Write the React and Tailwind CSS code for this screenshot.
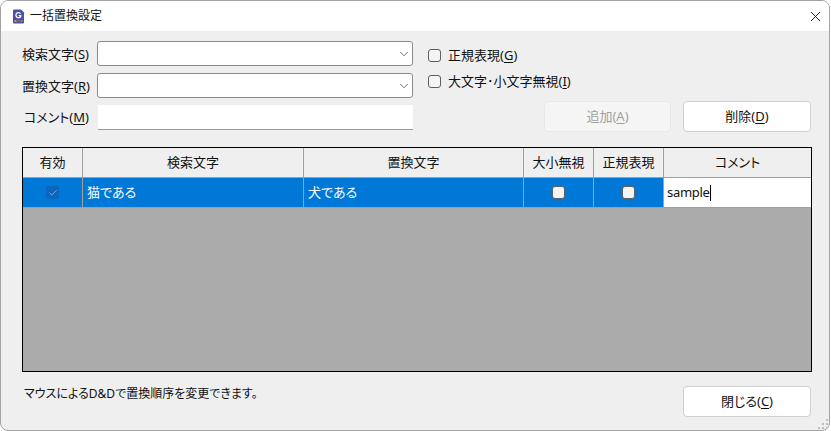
import { X, ChevronDown, Check } from 'lucide-react'

const font = { fontFamily: '"Noto Sans", "Noto Sans CJK JP", sans-serif' }

function Hot({ children }) {
  return <span className="underline underline-offset-2">{children}</span>
}

function Label({ children, className = '' }) {
  return <span className={`text-[13px] leading-[18px] text-[#111] whitespace-nowrap ${className}`}>{children}</span>
}

function Combo() {
  return (
    <div className="w-[316px] h-[25px] bg-white border border-[#8a8a8a] rounded-[3px] flex items-center justify-end pr-[1px]">
      <ChevronDown size={14} strokeWidth={1.2} className="text-[#333]" />
    </div>
  )
}

function CheckRow({ children }) {
  return (
    <div className="flex items-center h-[18px] gap-[7px]">
      <span className="w-[13px] h-[13px] rounded-[3px] border border-[#5f5f5f] bg-[#f4f4f4]" />
      <Label>{children}</Label>
    </div>
  )
}

function Button({ children, disabled }) {
  return (
    <div
      className={`h-[31px] rounded-[4px] border flex items-center justify-center text-[13px] ${
        disabled
          ? 'w-[127px] bg-[#f5f5f5] border-[#e8e8e8] text-[#a0a0a0]'
          : 'w-[128px] bg-white border-[#cfcfcf] text-[#111]'
      }`}
    >
      {children}
    </div>
  )
}

const columns = [
  { name: '有効', w: 'w-[60px]' },
  { name: '検索文字', w: 'w-[221px]' },
  { name: '置換文字', w: 'w-[220px]' },
  { name: '大小無視', w: 'w-[70px]' },
  { name: '正規表現', w: 'w-[70px]' },
  { name: 'コメント', w: 'flex-1' },
]

export default function App() {
  return (
    <div style={font} className="w-[831px] h-[431px] bg-white overflow-hidden [font-feature-settings:'palt']">
      <div className="w-[830px] h-[431px] border border-[#a3a3a3] rounded-t-[8px] rounded-b-[8px] bg-[#efefef] overflow-hidden flex flex-col">
        {/* title bar */}
        <div className="h-[30px] shrink-0 bg-white flex items-center pl-[11px] pr-[5px]">
          <svg width="13" height="15" viewBox="0 0 13 15">
            <path d="M1 1.5 Q1 .5 2 .5 H9 L12 3.5 V13.5 Q12 14.5 11 14.5 H2 Q1 14.5 1 13.5 Z" fill="#4a4fa8" />
            <rect x="2.5" y="11" width="2" height="2" fill="#c9a13b" />
            <rect x="5.5" y="11" width="2" height="2" fill="#c24a4a" />
            <rect x="8.5" y="11" width="2" height="2" fill="#4aa56a" />
            <path d="M8.6 4.6 A2.6 2.6 0 1 0 8.8 7.4 V6.6 H6.6" fill="none" stroke="#fff" strokeWidth="1.3" />
          </svg>
          <span className="ml-[5px] text-[12px] text-[#111] leading-none">一括置換設定</span>
          <X size={17} strokeWidth={1.3} className="ml-auto text-[#111]" />
        </div>

        {/* form */}
        <div className="flex pt-[10px] pl-[21px] pr-[18px] h-[116px] shrink-0">
          <div className="flex flex-col gap-[7px]">
            <div className="flex items-center">
              <Label className="w-[75px]">検索文字(<Hot>S</Hot>)</Label>
              <Combo />
            </div>
            <div className="flex items-center">
              <Label className="w-[75px]">置換文字(<Hot>R</Hot>)</Label>
              <Combo />
            </div>
            <div className="flex items-center">
              <Label className="w-[76px] pl-[2px] mt-[-2px]">コメント(<Hot>M</Hot>)</Label>
              <div className="w-[315px] h-[25px] bg-white border-b border-[#9a9a9a]" />
            </div>
          </div>
          <div className="flex-1 pl-[15px] flex flex-col">
            <div className="flex flex-col gap-[8px] pt-[5px]">
              <CheckRow>正規表現(<Hot>G</Hot>)</CheckRow>
              <CheckRow>大文字･小文字無視(<Hot>I</Hot>)</CheckRow>
            </div>
            <div className="flex justify-end gap-[12px] mt-[11px]">
              <Button disabled>追加(<Hot>A</Hot>)</Button>
              <Button>削除(<Hot>D</Hot>)</Button>
            </div>
          </div>
        </div>

        {/* table */}
        <div className="mx-[21px] h-[225px] w-[790px] shrink-0 border border-black bg-[#ababab] flex flex-col">
          <div className="flex h-[30px] bg-[#efefef] border-b border-[#a0a0a0]">
            {columns.map((c, i) => (
              <div
                key={c.name}
                className={`${c.w} flex items-center justify-center text-[13px] text-[#111] ${
                  i < 5 ? 'border-r border-[#a0a0a0]' : ''
                }`}
              >
                {c.name}
              </div>
            ))}
          </div>
          <div className="flex h-[30px] bg-[#0078d7] text-white text-[13px] border-b border-[#a0a0a0]">
            <div className="w-[60px] border-r border-[#a0a0a0] flex items-center justify-center">
              <span className="w-[13px] h-[13px] rounded-[2px] bg-[#0a66bd] flex items-center justify-center">
                <Check size={10} strokeWidth={1.5} className="text-[#b9d4ee]" />
              </span>
            </div>
            <div className="w-[221px] border-r border-[#a0a0a0] flex items-center pl-[4px] pt-[1px]">猫である</div>
            <div className="w-[220px] border-r border-[#a0a0a0] flex items-center pl-[4px] pt-[1px]">犬である</div>
            <div className="w-[70px] border-r border-[#a0a0a0] flex items-center justify-center">
              <span className="w-[13px] h-[13px] rounded-[3px] border border-[#5f5f5f] bg-[#f4f4f4]" />
            </div>
            <div className="w-[70px] border-r border-[#a0a0a0] flex items-center justify-center">
              <span className="w-[13px] h-[13px] rounded-[3px] border border-[#5f5f5f] bg-[#f4f4f4]" />
            </div>
            <div className="flex-1 bg-white text-[#111] text-[13px] flex items-center pl-[3px] pt-[1px] tracking-[-0.3px]">
              sample
              <span className="w-px h-[16px] bg-black" />
            </div>
          </div>
        </div>

        {/* footer */}
        <div className="flex items-start pl-[23px] pr-[18px] pt-[14px] relative flex-1">
          <span className="text-[12px] text-[#111] leading-[16px]">マウスによるD&amp;Dで置換順序を変更できます。</span>
          <div className="ml-auto">
            <Button>閉じる(<Hot>C</Hot>)</Button>
          </div>
          <svg width="11" height="11" viewBox="0 0 11 11" className="absolute right-[0px] bottom-[0px]" fill="#bdbdbd">
            <rect x="8" y="0" width="2" height="2" />
            <rect x="4" y="4" width="2" height="2" />
            <rect x="8" y="4" width="2" height="2" />
            <rect x="0" y="8" width="2" height="2" />
            <rect x="4" y="8" width="2" height="2" />
            <rect x="8" y="8" width="2" height="2" />
          </svg>
        </div>
      </div>
    </div>
  )
}
